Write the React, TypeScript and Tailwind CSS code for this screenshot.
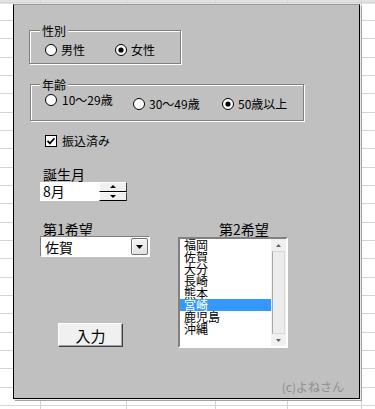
import React from "react";

const F = "font-['Noto_Sans_CJK_JP','Noto_Sans',sans-serif]";

function Radio({ checked }: { checked?: boolean }) {
  return (
    <svg width="12" height="12" viewBox="0 0 12 12" className="shrink-0">
      <circle cx="6" cy="6" r="5.5" fill="#fff" stroke="#000" strokeWidth="1" />
      {checked && <circle cx="6" cy="6" r="2.6" fill="#000" />}
    </svg>
  );
}

function Group({
  label,
  className,
  legendLeft,
  children,
}: {
  label: string;
  className: string;
  legendLeft: string;
  children: React.ReactNode;
}) {
  return (
    <div
      className={`relative border border-[#808080] shadow-[inset_1px_1px_0_#fff,1px_1px_0_#fff] ${className}`}
    >
      <div
        className={`absolute -top-[7px] ${legendLeft} bg-[#c0c0c0] px-[2px] text-[12px] leading-[14px] text-black`}
      >
        {label}
      </div>
      {children}
    </div>
  );
}

const prefs = ["福岡", "佐賀", "大分", "長崎", "熊本", "宮崎", "鹿児島", "沖縄"];

export default function App() {
  return (
    <div className={`relative w-[375px] h-[409px] overflow-hidden bg-white pl-[13px] pt-[4px] ${F}`}>
      {/* spreadsheet grid behind the form */}
      <div className="absolute inset-0 bg-[image:repeating-linear-gradient(to_bottom,transparent_0px,transparent_2px,#d4d4d4_2px,#d4d4d4_3px,transparent_3px,transparent_20px,#d4d4d4_20px,#d4d4d4_21px,transparent_21px,transparent_38px,#d4d4d4_38px,#d4d4d4_39px,transparent_39px,transparent_55px)]">
        <div className="absolute inset-0 flex">
          <div className="w-[41px] h-full border-r border-[#d4d4d4]" />
          <div className="w-[86px] h-full border-r border-[#d4d4d4]" />
          <div className="w-[89px] h-full border-r border-[#d4d4d4]" />
          <div className="w-[72px] h-full border-r border-[#d4d4d4]" />
          <div className="w-[74px] h-full border-r border-[#d4d4d4]" />
        </div>
        <div className="absolute left-0 top-0 w-full h-[4px] bg-[#d6d6d6]/70" />
      </div>

      {/* form panel */}
      <div className="relative flex flex-col w-[347px] h-[395px] bg-[#c0c0c0] border border-black border-t-[#9a9a9a] shadow-[1px_1px_0_#e8e8e8,2px_2px_0_#a0a0a0] text-black">
        {/* 性別 */}
        <Group label="性別" className="ml-[15px] mt-[25px] w-[152px] h-[34px]" legendLeft="left-[10px]">
          <div className="flex items-center pt-[13px] pl-[15px]">
            <div className="w-[70px] flex items-center gap-[4px]">
              <Radio />
              <span className="text-[12px] leading-[12px]">男性</span>
            </div>
            <div className="flex items-center gap-[4px]">
              <Radio checked />
              <span className="text-[12px] leading-[12px]">女性</span>
            </div>
          </div>
        </Group>

        {/* 年齢 */}
        <Group label="年齢" className="ml-[16px] mt-[20px] w-[274px] h-[37px]" legendLeft="left-[9px]">
          <div className="flex items-start pl-[14px]">
            <div className="w-[88px] mt-[9px] flex items-center gap-[5px]">
              <Radio />
              <span className="text-[12px] leading-[12px]">10〜29歳</span>
            </div>
            <div className="w-[89px] mt-[13px] flex items-center gap-[4px]">
              <Radio />
              <span className="text-[12px] leading-[12px]">30〜49歳</span>
            </div>
            <div className="mt-[13px] flex items-center gap-[4px]">
              <Radio checked />
              <span className="text-[12px] leading-[12px]">50歳以上</span>
            </div>
          </div>
        </Group>

        {/* 振込済み */}
        <div className="ml-[31px] mt-[14px] h-[12px] flex items-center gap-[5px]">
          <svg width="12" height="12" viewBox="0 0 12 12" className="shrink-0">
            <rect x="0.5" y="0.5" width="11" height="11" fill="#fff" stroke="#000" />
            <path d="M2.5 5.8 L4.9 8.4 L9.4 3.2" stroke="#000" strokeWidth="1.7" fill="none" />
          </svg>
          <span className="text-[12px] leading-[12px]">振込済み</span>
        </div>

        {/* 誕生月 */}
        <div className="ml-[29px] mt-[20px] text-[14px] leading-[15px] h-[15px]">誕生月</div>
        <div className="ml-[26px] flex h-[19px]">
          <div className="w-[59px] h-[19px] bg-white pl-[3px] text-[14px] leading-[19px]">8月</div>
          <div className="w-[28px] flex flex-col">
            <div className="h-[10px] flex items-center justify-center bg-[#f0f0f0] border-t border-l border-white border-b border-r border-b-black border-r-[#404040]">
              <svg width="6" height="3" viewBox="0 0 6 3">
                <polygon points="0,3 6,3 3,0" fill="#000" />
              </svg>
            </div>
            <div className="h-[10px] flex items-center justify-center bg-[#f0f0f0] border-t border-l border-white border-b border-r border-b-black border-r-[#404040]">
              <svg width="6" height="3" viewBox="0 0 6 3">
                <polygon points="0,0 6,0 3,3" fill="#000" />
              </svg>
            </div>
          </div>
        </div>

        {/* 希望 */}
        <div className="mt-[21px] ml-[26px] flex">
          <div className="w-[110px] flex flex-col">
            <div className="pl-[3px] h-[14px] text-[14px] leading-[14px]">第1希望</div>
            <div className="h-[21px] flex items-center justify-between bg-white border border-t-[#808080] border-l-[#808080] border-b-white border-r-white pl-[4px] pr-[1px]">
              <span className="text-[14px] leading-[16px]">佐賀</span>
              <div className="w-[17px] h-[17px] rounded-[2px] border border-[#707070] bg-[image:linear-gradient(#f4f4f4,#e2e2e2)] shadow-[inset_1px_1px_0_#fff] flex items-center justify-center">
                <svg width="7" height="4" viewBox="0 0 7 4">
                  <polygon points="0,0 7,0 3.5,4" fill="#000" />
                </svg>
              </div>
            </div>
            <div className="mt-[66px] ml-[18px] w-[65px] h-[24px] flex items-center justify-center bg-[#f0f0f0] border border-t-white border-l-white border-b-[#404040] border-r-[#404040] shadow-[inset_-1px_-1px_0_#a0a0a0] text-[15px] leading-[15px]">
              入力
            </div>
          </div>

          <div className="ml-[28px] w-[110px] flex flex-col">
            <div className="pl-[41px] h-[14px] text-[14px] leading-[14px]">第2希望</div>
            <div className="mt-[1px] h-[111px] flex bg-white border-2 border-t-[#808080] border-l-[#808080] border-b-white border-r-white">
              <div className="flex-1 flex flex-col">
                {prefs.map((p) => (
                  <div
                    key={p}
                    className={`h-[12px] pl-[4px] text-[12px] leading-[12px] ${
                      p === "宮崎" ? "bg-[#3399ff] text-white" : "text-black"
                    }`}
                  >
                    {p}
                  </div>
                ))}
              </div>
              <div className="w-[15px] flex flex-col bg-[#f0f0f0]">
                <div className="h-[12px] flex items-center justify-center">
                  <svg width="5" height="3" viewBox="0 0 5 3">
                    <polygon points="0,3 5,3 2.5,0" fill="#606060" />
                  </svg>
                </div>
                <div className="flex-1 mx-[1px] border border-l-[#a8a8a8] border-t-[#d8d8d8] border-r-[#d8d8d8] border-b-[#d8d8d8] bg-[#ececec]" />
                <div className="h-[12px] flex items-center justify-center">
                  <svg width="5" height="3" viewBox="0 0 5 3">
                    <polygon points="0,0 5,0 2.5,3" fill="#606060" />
                  </svg>
                </div>
              </div>
            </div>
          </div>
        </div>

        <div className="self-end mr-[15px] mt-[32px] text-[12px] leading-[14px] text-[#8e8e8e]">(c)よねさん</div>
      </div>
    </div>
  );
}
